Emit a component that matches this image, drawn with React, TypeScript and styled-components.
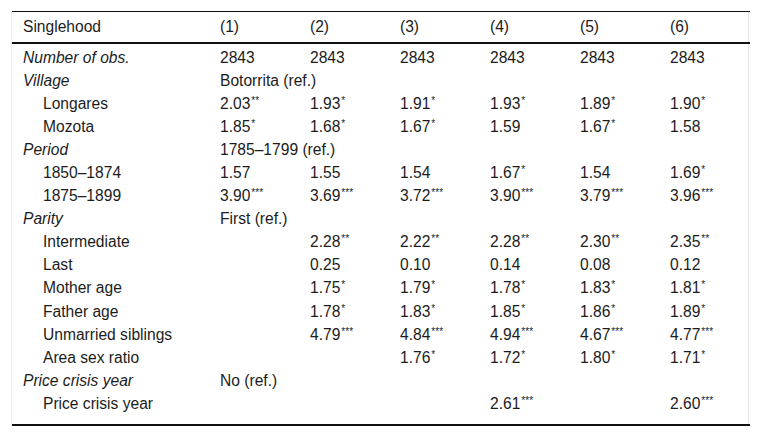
import React from "react";
import styled, { createGlobalStyle } from "styled-components";

const GlobalStyle = createGlobalStyle`
  html, body {
    margin: 0;
    padding: 0;
    background: #ffffff;
  }
  body {
    font-family: "Liberation Sans", Arial, sans-serif;
    color: #1c1c1c;
  }
`;

type Cell = { v: string; s?: string } | null;

type Row = {
  label: string;
  kind: "group" | "item";
  cells?: Cell[];
  note?: string;
};

const n = (v: string, s?: string): Cell => ({ v, s });

const rows: Row[] = [
  {
    label: "Number of obs.",
    kind: "group",
    cells: [n("2843"), n("2843"), n("2843"), n("2843"), n("2843"), n("2843")],
  },
  { label: "Village", kind: "group", note: "Botorrita (ref.)" },
  {
    label: "Longares",
    kind: "item",
    cells: [n("2.03", "**"), n("1.93", "*"), n("1.91", "*"), n("1.93", "*"), n("1.89", "*"), n("1.90", "*")],
  },
  {
    label: "Mozota",
    kind: "item",
    cells: [n("1.85", "*"), n("1.68", "*"), n("1.67", "*"), n("1.59"), n("1.67", "*"), n("1.58")],
  },
  { label: "Period", kind: "group", note: "1785–1799 (ref.)" },
  {
    label: "1850–1874",
    kind: "item",
    cells: [n("1.57"), n("1.55"), n("1.54"), n("1.67", "*"), n("1.54"), n("1.69", "*")],
  },
  {
    label: "1875–1899",
    kind: "item",
    cells: [n("3.90", "***"), n("3.69", "***"), n("3.72", "***"), n("3.90", "***"), n("3.79", "***"), n("3.96", "***")],
  },
  { label: "Parity", kind: "group", note: "First (ref.)" },
  {
    label: "Intermediate",
    kind: "item",
    cells: [null, n("2.28", "**"), n("2.22", "**"), n("2.28", "**"), n("2.30", "**"), n("2.35", "**")],
  },
  {
    label: "Last",
    kind: "item",
    cells: [null, n("0.25"), n("0.10"), n("0.14"), n("0.08"), n("0.12")],
  },
  {
    label: "Mother age",
    kind: "item",
    cells: [null, n("1.75", "*"), n("1.79", "*"), n("1.78", "*"), n("1.83", "*"), n("1.81", "*")],
  },
  {
    label: "Father age",
    kind: "item",
    cells: [null, n("1.78", "*"), n("1.83", "*"), n("1.85", "*"), n("1.86", "*"), n("1.89", "*")],
  },
  {
    label: "Unmarried siblings",
    kind: "item",
    cells: [null, n("4.79", "***"), n("4.84", "***"), n("4.94", "***"), n("4.67", "***"), n("4.77", "***")],
  },
  {
    label: "Area sex ratio",
    kind: "item",
    cells: [null, null, n("1.76", "*"), n("1.72", "*"), n("1.80", "*"), n("1.71", "*")],
  },
  { label: "Price crisis year", kind: "group", note: "No (ref.)" },
  {
    label: "Price crisis year",
    kind: "item",
    cells: [null, null, null, n("2.61", "***"), null, n("2.60", "***")],
  },
];

const headers = ["(1)", "(2)", "(3)", "(4)", "(5)", "(6)"];

export default function App() {
  return (
    <>
      <GlobalStyle />
      <Page>
        <Frame>
          <Table>
            <colgroup>
              <col style={{ width: 198 }} />
              {headers.map((h) => (
                <col key={h} style={{ width: 90 }} />
              ))}
            </colgroup>
            <thead>
              <tr>
                <HeadCell $first>Singlehood</HeadCell>
                {headers.map((h) => (
                  <HeadCell key={h}>{h}</HeadCell>
                ))}
              </tr>
            </thead>
            <tbody>
              {rows.map((r, i) => {
                const edge = i === 0 ? "top" : i === rows.length - 1 ? "bottom" : undefined;
                return (
                  <tr key={i}>
                    <Label $kind={r.kind} $edge={edge}>
                      {r.label}
                    </Label>
                    {r.note ? (
                      <Value colSpan={6} $edge={edge}>
                        {r.note}
                      </Value>
                    ) : (
                      (r.cells || []).map((c, j) => (
                        <Value key={j} $edge={edge}>
                          {c ? c.v : ""}
                          {c && c.s ? <Stars>{c.s}</Stars> : null}
                        </Value>
                      ))
                    )}
                  </tr>
                );
              })}
            </tbody>
          </Table>
        </Frame>
      </Page>
    </>
  );
}

const Page = styled.div`
  padding: 11px 10px 0 11px;
  width: 760px;
  height: 438px;
  box-sizing: border-box;
  overflow: hidden;
`;

const Frame = styled.div`
  width: 738px;
  box-sizing: border-box;
  border-left: 1px solid #ececec;
  border-right: 1px solid #e4e4e4;
`;

const Table = styled.table`
  width: 100%;
  border-collapse: collapse;
  table-layout: fixed;
  font-size: 15.6px;
  border-top: 1px solid #111;
  border-bottom: 2px solid #111;

  & > thead > tr {
    border-bottom: 2px solid #111;
  }
`;

const HeadCell = styled.th<{ $first?: boolean }>`
  text-align: left;
  font-weight: 400;
  height: 30px;
  padding: 0 0 0 ${(p) => (p.$first ? "11px" : "10px")};
  vertical-align: middle;
  white-space: nowrap;
`;

type Edge = "top" | "bottom" | undefined;

const edgePad = (e: Edge) =>
  e === "top" ? "padding-top: 2px;" : e === "bottom" ? "padding-bottom: 8px;" : "";

const Label = styled.td<{ $kind: "group" | "item"; $edge: Edge }>`
  height: 23.1px;
  padding: 0 0 0 ${(p) => (p.$kind === "item" ? "31px" : "11px")};
  font-style: ${(p) => (p.$kind === "group" ? "italic" : "normal")};
  white-space: nowrap;
  vertical-align: middle;
  line-height: 18px;
  ${(p) => edgePad(p.$edge)}
`;

const Value = styled.td<{ $edge: Edge }>`
  height: 23.1px;
  padding: 0 0 0 10px;
  white-space: nowrap;
  vertical-align: middle;
  line-height: 18px;
  ${(p) => edgePad(p.$edge)}
`;

const Stars = styled.sup`
  font-size: 10px;
  line-height: 0;
  vertical-align: 5px;
  margin-left: 1px;
`;
